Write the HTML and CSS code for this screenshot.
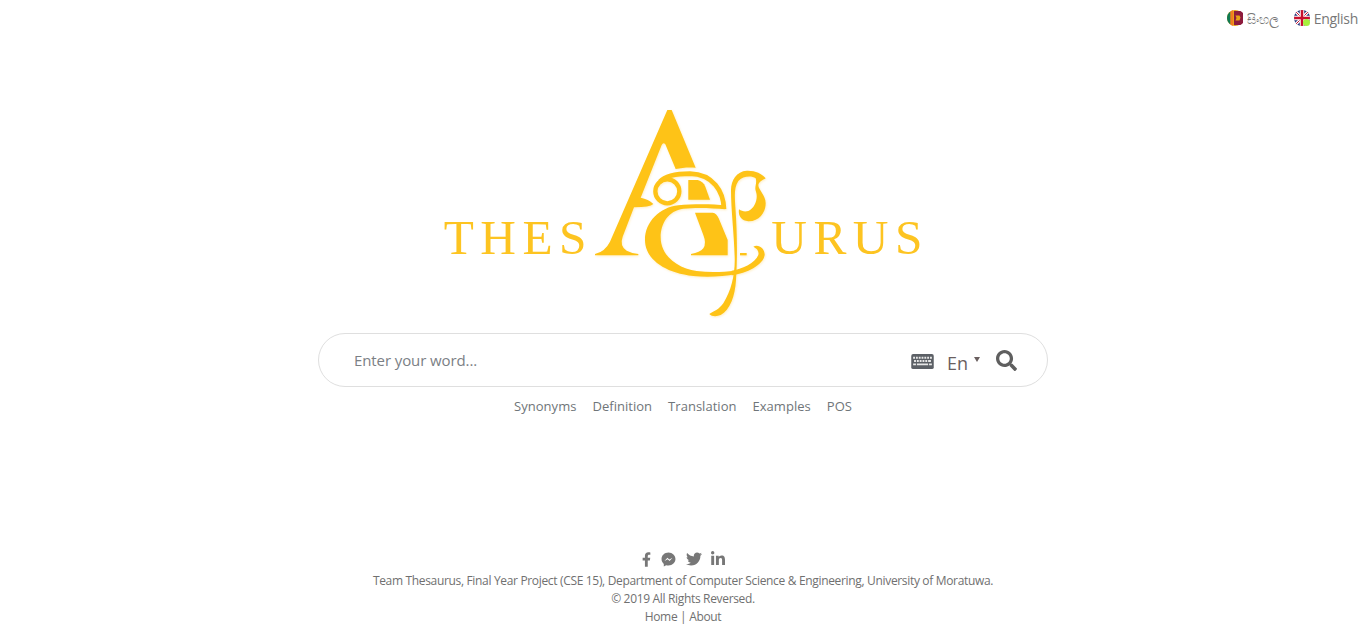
FILE: index.html
```html
<!DOCTYPE html>
<html lang="en">
<head>
    <meta charset="UTF-8">
    <meta name="viewport" content="width=device-width, initial-scale=1.0">
    <title>Thesaurus</title>
    <link rel="stylesheet" href="styles.css">
</head>
<body>
    <header class="lang-bar">
        <a class="lang-link lang-si" href="#">
            <svg class="flag" viewBox="0 0 16 16">
                <circle cx="8" cy="8" r="8" fill="#e8a317"/>
                <path d="M3.500 1.400A8 8 0 0 0 3.500 14.600z" fill="#0f7a54"/>
                <path d="M3.500 1.400A8 8 0 0 1 6 .3v15.400a8 8 0 0 1-2.500-1.100z" fill="#f47b20"/>
                <path d="M7 1h6.500a8 8 0 0 1 0 14H7z" fill="#8d1b3d"/>
                <path d="M8.500 5.500h4l1 2-1 3h-4l1-2.500z" fill="#e8a317"/>
            </svg>
            <span class="lang-si-label">සිංහල</span>
        </a>
        <a class="lang-link" href="#">
            <span class="flag-wrap">
                <svg class="flag" viewBox="0 0 16 16">
                    <defs><clipPath id="flag-clip"><circle cx="8" cy="8" r="8"/></clipPath></defs>
                    <g clip-path="url(#flag-clip)">
                        <rect width="16" height="16" fill="#27357a"/>
                        <path d="M0 0L16 16M16 0L0 16" stroke="#fff" stroke-width="3"/>
                        <path d="M0 0L16 16M16 0L0 16" stroke="#c8102e" stroke-width="1"/>
                        <path d="M8 0V16M0 8H16" stroke="#fff" stroke-width="4.500"/>
                        <path d="M8 0V16M0 8H16" stroke="#c8102e" stroke-width="2.500"/>
                    </g>
                </svg>
                <span class="online-dot"></span>
            </span>
            <span>English</span>
        </a>
    </header>

    <main class="home">
        <svg class="logo" viewBox="0 0 1518 675" role="img" aria-label="Thesaurus">
            <text class="logo-word" x="41" y="463">THES</text>
            <text class="logo-word" x="1024" y="463">URUS</text>
            <g class="logo-mark">
                <!-- A -->
                <path d="M712 30L725 30L797 203C775 201 755 203 737 207L706 133Q700 125 695 135L632 293Q655 297 670 312Q660 322 612 322L578 410Q568 438 590 452Q605 460 625 462L625 466L495 466L495 462Q525 455 540 425Z"/>
                <path d="M795 338L848 338Q860 340 866 355L893 420L893 466L783 466L783 462Q810 458 820 445Q830 430 820 405Z"/>
                <path d="M775 240L803 240Q820 245 826 260L840 299L775 299Z"/>
                <path d="M930 459L950 459L950 466L930 466Z"/>
                <!-- sinhala letter -->
                <circle class="logo-line" cx="712" cy="274" r="36" stroke-width="13"/>
                <path class="logo-line" d="M690 245C705 228 740 221 780 221C850 223 880 275 882 327" stroke-width="14"/>
                <path d="M886 316L886 328C850 324 800 322 760 326C715 332 692 370 692 412C692 470 745 505 800 513C840 518 880 516 915 512L918 522C880 530 830 532 790 528C700 518 645 475 645 420C645 365 690 322 745 316C790 311 850 312 886 316Z"/>
                <path d="M905 512C935 508 975 490 985 465C988 452 980 445 970 440C985 432 1005 445 1004 465C1000 495 950 520 905 526Z"/>
                <path d="M1007 235C995 220 975 211 950 212C920 214 903 240 903 270C903 330 912 400 914 470C916 520 905 570 880 610C868 628 850 635 838 642C845 650 860 650 872 645C900 630 915 590 918 540C922 480 922 400 916 320C914 290 912 262 925 243C938 228 965 226 977 235C982 250 972 262 978 275C985 295 975 325 955 333C945 336 935 334 927 328C924 345 932 362 955 364C985 365 1007 340 1007 310C1007 285 985 270 985 255C987 245 998 240 1007 235Z"/>
            </g>
        </svg>

        <form class="search-box" action="#">
            <input class="search-input" type="text" placeholder="Enter your word...">
            <svg class="kb-icon" viewBox="0 0 24 16">
                <rect width="24" height="16" rx="2" fill="#5c6066"/>
                <path class="kb-keys" d="M2 3h2v2H2zM5 3h2v2H5zM8 3h2v2H8zM11 3h2v2h-2zM14 3h2v2h-2zM17 3h2v2h-2zM20 3h2v2h-2zM3 6.500h2v2H3zM6 6.500h2v2H6zM9 6.500h2v2H9zM12 6.500h2v2h-2zM15 6.500h2v2h-2zM18 6.500h3v2h-3zM2 10h3v2H2zM6 10h12v2H6zM19 10h3v2h-3z"/>
            </svg>
            <span class="lang-select">En<span class="lang-caret"></span></span>
            <svg class="search-icon" viewBox="0 0 512 512">
                <path d="M505 442.7L405.3 343c-4.5-4.5-10.6-7-17-7H372c27.6-35.3 44-79.7 44-128C416 93.1 322.9 0 208 0S0 93.1 0 208s93.1 208 208 208c48.3 0 92.7-16.4 128-44v16.3c0 6.4 2.5 12.5 7 17l99.7 99.7c9.4 9.4 24.6 9.4 33.9 0l28.3-28.3c9.4-9.4 9.4-24.6.1-34zM208 336c-70.7 0-128-57.2-128-128 0-70.7 57.2-128 128-128 70.7 0 128 57.2 128 128 0 70.7-57.2 128-128 128z"/>
            </svg>
        </form>

        <nav class="search-tabs">
            <a href="#">Synonyms</a>
            <a href="#">Definition</a>
            <a href="#">Translation</a>
            <a href="#">Examples</a>
            <a href="#">POS</a>
        </nav>
    </main>

    <footer class="site-footer">
        <div class="social">
            <svg class="social-fb" viewBox="0 0 320 512"><path d="M279.14 288l14.22-92.66h-88.91v-60.13c0-25.35 12.42-50.06 52.24-50.06h40.42V6.26S260.43 0 225.36 0c-73.22 0-121.08 44.38-121.08 124.72v70.62H22.89V288h81.39v224h100.17V288z"/></svg>
            <svg class="social-ms" viewBox="0 0 28 28">
                <path d="M14 1C6.600 1 1 6.300 1 13.200c0 3.700 1.600 6.800 4.200 9V27l4.400-2.500c1.400.4 2.900.6 4.400.6 7.400 0 13-5.300 13-11.900S21.400 1 14 1z"/>
                <path class="social-ms-bolt" d="M6.500 17L12 10.500L15.500 14L21.500 10.500L16 17L12.500 13.500Z"/>
            </svg>
            <svg class="social-tw" viewBox="0 0 512 512"><path d="M459.37 151.716c.325 4.548.325 9.097.325 13.645 0 138.72-105.583 298.558-298.558 298.558-59.452 0-114.68-17.219-161.137-47.106 8.447.974 16.568 1.299 25.34 1.299 49.055 0 94.213-16.568 130.274-44.832-46.132-.975-84.792-31.188-98.112-72.772 6.498.974 12.995 1.624 19.818 1.624 9.421 0 18.843-1.3 27.614-3.573-48.081-9.747-84.143-51.98-84.143-102.985v-1.299c13.969 7.797 30.214 12.67 47.431 13.319-28.264-18.843-46.781-51.005-46.781-87.391 0-19.492 5.197-37.36 14.294-52.954 51.655 63.675 129.3 105.258 216.365 109.807-1.624-7.797-2.599-15.918-2.599-24.04 0-57.828 46.782-104.934 104.934-104.934 30.213 0 57.502 12.67 76.67 33.137 23.715-4.548 46.456-13.32 66.599-25.34-7.798 24.366-24.366 44.833-46.132 57.827 21.117-2.273 41.584-8.122 60.426-16.243-14.292 20.791-32.161 39.308-52.628 54.253z"/></svg>
            <svg class="social-in" viewBox="0 0 448 512"><path d="M100.28 448H7.4V148.9h92.88zM53.79 108.1C24.09 108.1 0 83.5 0 53.8a53.79 53.79 0 0 1 107.58 0c0 29.7-24.1 54.3-53.79 54.3zM447.9 448h-92.68V302.4c0-34.7-.7-79.2-48.29-79.2-48.29 0-55.69 37.7-55.69 76.7V448h-92.78V148.9h89.08v40.8h1.3c12.4-23.5 42.69-48.3 87.88-48.3 94 0 111.28 61.9 111.28 142.3V448z"/></svg>
        </div>
        <p>Team Thesaurus, Final Year Project (CSE 15), Department of Computer Science &amp; Engineering, University of Moratuwa.</p>
        <p>© 2019 All Rights Reversed.</p>
        <p><a href="#">Home</a> | <a href="#">About</a></p>
    </footer>
</body>
</html>
```

FILE: styles.css
```css
html, body {
    margin: 0;
    background-color: #fff;
}
body {
    height: 633px;
    overflow: hidden;
    display: flex;
    flex-direction: column;
    font-family: "Open Sans", "Noto Sans", sans-serif;
    color: #777;
}
a {
    color: inherit;
    text-decoration: none;
}
p {
    margin: 0;
}

/* language links */
.lang-bar {
    height: 36px;
    display: flex;
    justify-content: flex-end;
    align-items: flex-start;
    gap: 15px;
    padding: 10px 8px 0 0;
    box-sizing: border-box;
}
.lang-link {
    display: flex;
    align-items: flex-start;
    gap: 4px;
    font-size: 14px;
    letter-spacing: -0.3px;
    line-height: 18px;
}
.flag {
    display: block;
    width: 16px;
    height: 16px;
}
.flag-wrap {
    position: relative;
    display: block;
}
.online-dot {
    position: absolute;
    right: 0;
    bottom: 0;
    width: 7px;
    height: 7px;
    border-radius: 50%;
    background-color: #a6f03c;
}
.lang-si-label {
    font-size: 13px;
    letter-spacing: -0.2px;
}

/* logo */
.home {
    display: flex;
    flex-direction: column;
    align-items: center;
}
.logo {
    display: block;
    width: 506px;
    height: 225px;
    margin-top: 64px;
}
.logo-word {
    font-family: "Liberation Serif", serif;
    font-size: 148px;
    letter-spacing: 19.5px;
    fill: #fdc421;
}
.logo-mark {
    fill: #fec317;
    filter: drop-shadow(2px 3px 3px rgba(253, 205, 90, 0.35));
}
.logo-line {
    fill: none;
    stroke: #fec317;
}

/* search */
.search-box {
    width: 730px;
    height: 54px;
    margin-top: 8px;
    padding: 0 30px 0 35px;
    box-sizing: border-box;
    display: flex;
    align-items: center;
    border: 1px solid #dfdfdf;
    border-radius: 27px;
    background-color: #fff;
}
.search-input {
    flex: 1;
    min-width: 0;
    border: 0;
    outline: 0;
    padding: 0;
    font-family: inherit;
    font-size: 15px;
    letter-spacing: -0.1px;
}
.search-input::placeholder {
    color: #7b8085;
}
.kb-icon {
    width: 23px;
    height: 15px;
    margin-top: 2px;
}
.kb-keys {
    fill: #e8e8e8;
}
.lang-select {
    display: flex;
    align-items: center;
    margin-left: 13px;
    font-size: 18px;
    color: #6a5f5f;
    padding-top: 6px;
}
.lang-caret {
    width: 0;
    height: 0;
    margin: -7px 0 0 6px;
    border-left: 3.5px solid transparent;
    border-right: 3.5px solid transparent;
    border-top: 5px solid #6a5f5f;
}
.search-icon {
    width: 21px;
    height: 21px;
    margin-left: 16px;
    fill: #5f5f5f;
}
.search-tabs {
    display: flex;
    justify-content: center;
    gap: 16px;
    margin-top: 10px;
    font-size: 13px;
    line-height: 18px;
    letter-spacing: 0.03px;
    color: #6f7579;
}

/* footer */
.site-footer {
    margin-top: auto;
    padding-bottom: 7px;
    text-align: center;
    font-size: 12px;
    line-height: 18px;
    letter-spacing: -0.33px;
    color: #707070;
}
.social {
    display: flex;
    justify-content: center;
    align-items: center;
    gap: 10px;
    height: 18px;
    margin-bottom: 4px;
    fill: #777;
}
.social-fb {
    width: 9px;
    height: 15px;
}
.social-ms {
    width: 15px;
    height: 15px;
}
.social-ms-bolt {
    fill: #fff;
}
.social-tw {
    width: 16px;
    height: 16px;
    margin-right: -1px;
}
.social-in {
    width: 14px;
    height: 16px;
}
```
